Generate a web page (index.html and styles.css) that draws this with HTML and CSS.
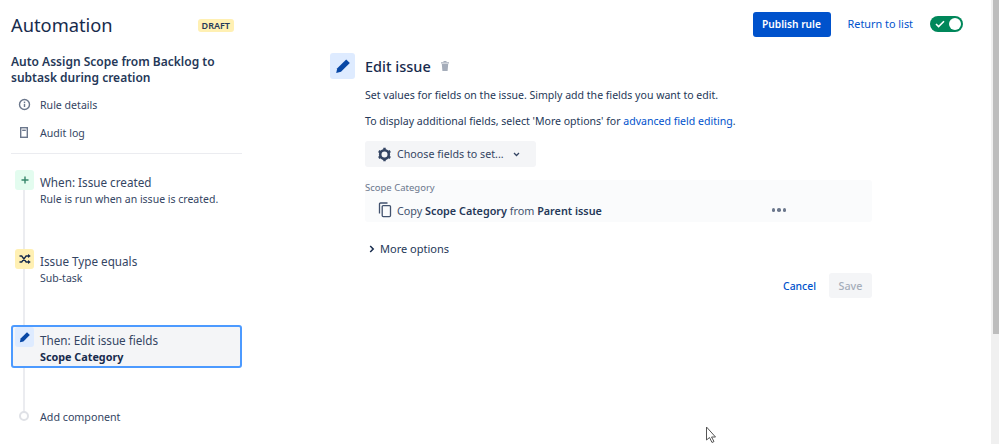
FILE: index.html
```html
<!DOCTYPE html>
<html lang="en">
<head>
  <meta charset="UTF-8">
  <title>Automation</title>
  <link rel="stylesheet" href="styles.css">
</head>
<body>
  <div class="page">
    <aside class="sidebar">
      <div class="sidebar-head">
        <h1>Automation</h1>
        <span class="draft">DRAFT</span>
      </div>
      <h2 class="rule-name">Auto Assign Scope from Backlog to subtask during creation</h2>
      <ul class="side-links">
        <li>
          <svg width="16" height="16" viewBox="0 0 16 16"><circle cx="7.5" cy="7.5" r="5" fill="none" stroke="#6b778c" stroke-width="1.4"/><rect x="6.8" y="6.8" width="1.4" height="3.2" fill="#6b778c"/><rect x="6.8" y="4.6" width="1.4" height="1.4" fill="#6b778c"/></svg>
          Rule details
        </li>
        <li>
          <svg width="16" height="16" viewBox="0 0 16 16"><rect x="3.7" y="2.7" width="6.6" height="9.6" fill="none" stroke="#6b778c" stroke-width="1.4"/><rect x="5.2" y="4.6" width="3.6" height="1.4" fill="#6b778c"/></svg>
          Audit log
        </li>
      </ul>
      <div class="steps">
        <div class="line"></div>
        <div class="step step-when">
          <span class="step-icon green">
            <svg width="10" height="10" viewBox="0 0 10 10"><path d="M5 1.5v7M1.5 5h7" stroke="#36866b" stroke-width="1.4"/></svg>
          </span>
          <div class="step-text">
            <div class="step-title">When: Issue created</div>
            <div class="step-sub">Rule is run when an issue is created.</div>
          </div>
        </div>
        <div class="step step-if">
          <span class="step-icon yellow">
            <svg width="12" height="10" viewBox="0 0 12 10"><path d="M0.5 2h2.200l4.400 6h2.600M0.5 8h2.200l4.400-6h2.600" fill="none" stroke="#172b4d" stroke-width="1.300"/><path d="M9 0l2.800 2L9 4zM9 6l2.800 2L9 10z" fill="#172b4d"/></svg>
          </span>
          <div class="step-text">
            <div class="step-title">Issue Type equals</div>
            <div class="step-sub">Sub-task</div>
          </div>
        </div>
        <div class="step step-then">
          <span class="step-icon blue">
            <svg width="12" height="12" viewBox="0 0 12 12"><path d="M8 1.200l2.800 2.800-6.400 6.400-3.500.8.700-3.600z" fill="#0747a6"/></svg>
          </span>
          <div class="step-text">
            <div class="step-title">Then: Edit issue fields</div>
            <div class="step-bold">Scope Category</div>
          </div>
        </div>
        <div class="step step-add">
          <span class="add-dot"></span>
          <div class="step-text">Add component</div>
        </div>
      </div>
    </aside>

    <main class="content">
      <div class="topbar">
        <button class="publish">Publish rule</button>
        <a class="return-link">Return to list</a>
        <span class="toggle">
          <svg width="10" height="8" viewBox="0 0 10 8"><path d="M1 4l2.600 2.600L9 1.200" fill="none" stroke="#fff" stroke-width="1.600"/></svg>
          <span class="knob"></span>
        </span>
      </div>

      <div class="editor">
        <span class="editor-icon">
          <svg width="18" height="18" viewBox="0 0 18 18"><path d="M12.200 2.400l3.600 3.600-8.800 8.800-4.800 1.200 1.100-4.800z" fill="#0747a6"/></svg>
        </span>
        <div class="editor-body">
          <div class="editor-title">
            <h3>Edit issue</h3>
            <svg width="12" height="12" viewBox="0 0 12 12"><path d="M2 2.200h8v1.200H2zM4.500 1h3v1h-3zM2.800 4h6.400l-.6 7H3.400z" fill="#a5adba"/></svg>
          </div>
          <p>Set values for fields on the issue. Simply add the fields you want to edit.</p>
          <p>To display additional fields, select 'More options' for <a>advanced field editing</a>.</p>
          <button class="choose">
            <svg width="15" height="15" viewBox="0 0 16 16"><circle cx="8" cy="8" r="4.600" fill="none" stroke="#344563" stroke-width="2.800"/><path d="M8 0.800v2.400M8 12.800v2.400M1.800 4.400l2.100 1.200M12.100 10.400l2.100 1.200M1.800 11.600l2.100-1.200M12.100 5.600l2.100-1.200" stroke="#344563" stroke-width="2.600"/></svg>
            Choose fields to set...
            <svg class="caret" width="7" height="5" viewBox="0 0 8 6"><path d="M1 1.200L4 4.200 7 1.200" fill="none" stroke="#344563" stroke-width="1.500"/></svg>
          </button>
          <div class="field">
            <div class="field-label">Scope Category</div>
            <div class="field-row">
              <svg width="14" height="16" viewBox="0 0 14 16"><path d="M9.500 1H2.500a1 1 0 0 0-1 1v9.500" fill="none" stroke="#42526e" stroke-width="1.300"/><rect x="4.200" y="3.600" width="8.300" height="11" rx="1" fill="none" stroke="#42526e" stroke-width="1.300"/></svg>
              <span>Copy <b>Scope Category</b> from <b>Parent issue</b></span>
              <span class="dots"><i></i><i></i><i></i></span>
            </div>
          </div>
          <div class="more">
            <svg width="6" height="8" viewBox="0 0 6 8"><path d="M1.200 1L4.200 4 1.200 7" fill="none" stroke="#172b4d" stroke-width="1.500"/></svg>
            More options
          </div>
          <div class="actions">
            <a class="cancel">Cancel</a>
            <button class="save">Save</button>
          </div>
        </div>
      </div>
    </main>
  </div>

  <div class="scrollbar"><div class="scroll-thumb"></div></div>
  <svg class="cursor" width="14" height="18" viewBox="0 0 14 18"><path d="M1.500 1v13l3-2.500 2.500 5 2-1-2.500-4.500h4z" fill="#fff" stroke="#555" stroke-width="1"/></svg>
</body>
</html>
```

FILE: styles.css
```css
* {
  box-sizing: border-box;
}
body {
  margin: 0;
  height: 444px;
  overflow: hidden;
  background-color: #fff;
  color: #172b4d;
  font-family: "Noto Sans", sans-serif;
  font-size: 10.6px;
  position: relative;
}
.page {
  display: flex;
  padding-left: 11px;
  height: 100%;
}
.sidebar {
  width: 231px;
  flex-shrink: 0;
}
.sidebar-head {
  display: flex;
  justify-content: space-between;
  align-items: center;
  padding-top: 12px;
  padding-right: 8px;
}
h1 {
  margin: 0;
  font-size: 18.3px;
  line-height: 26px;
  font-weight: 400;
}
.draft {
  background-color: #fff0b3;
  border-radius: 3px;
  font-size: 9px;
  font-weight: 600;
  line-height: 13px;
  padding: 0 4px;
  color: #253858;
}
.rule-name {
  margin: 16px 0 0;
  font-size: 12px;
  line-height: 16px;
  font-weight: 600;
  color: #253858;
}
.side-links {
  list-style: none;
  margin: 5px 0 0;
  padding: 0 0 0 6px;
}
.side-links li {
  display: flex;
  align-items: center;
  gap: 7px;
  height: 28px;
  color: #344563;
}
.steps {
  position: relative;
  border-top: 1px solid #ebecf0;
  margin-top: 6px;
  padding-top: 16px;
}
.line {
  position: absolute;
  left: 12px;
  top: 30px;
  height: 228px;
  width: 2px;
  background-color: #ebecf0;
}
.step {
  position: relative;
  display: flex;
  padding-left: 29px;
  line-height: 17px;
  color: #344563;
}
.step-text {
  padding-top: 4px;
}
.step-title {
  font-size: 11.7px;
}
.step-sub {
  font-size: 10.5px;
}
.step-icon {
  position: absolute;
  left: 4px;
  top: 0;
  width: 19px;
  height: 20px;
  border-radius: 3px;
  display: flex;
  align-items: center;
  justify-content: center;
}
.green { background-color: #e3fcef; }
.yellow { background-color: #fff0b3; }
.blue { background-color: #deebff; }
.step-bold {
  font-weight: 700;
  font-size: 10.8px;
  line-height: 16px;
  color: #172b4d;
}
.step-if {
  margin-top: 41px;
}
.step-then {
  margin-top: 38px;
  height: 43px;
  padding-top: 1px;
  padding-left: 27px;
  border: 2px solid #4c9aff;
  border-radius: 3px;
  background-color: #f4f5f7;
}
.step-then .step-icon {
  left: 2px;
}
.step-add {
  margin-top: 37px;
  font-size: 10.7px;
}
.add-dot {
  position: absolute;
  left: 8px;
  top: 6px;
  width: 10px;
  height: 10px;
  border-radius: 50%;
  border: 2px solid #dfe1e6;
  background-color: #fff;
}
.content {
  flex: 1;
  padding-right: 36px;
  min-width: 0;
}
.topbar {
  display: flex;
  justify-content: flex-end;
  align-items: center;
  padding-top: 11px;
  height: 37px;
}
.publish {
  background-color: #0052cc;
  color: #fff;
  border: none;
  border-radius: 3px;
  font: 600 10.2px "Noto Sans", sans-serif;
  width: 78px;
  height: 25px;
  margin-top: 1px;
  padding: 0 0 1px;
}
.return-link {
  color: #0052cc;
  font-size: 10.85px;
  margin-left: 17px;
  padding-bottom: 1px;
}
.toggle {
  margin-left: 17px;
  width: 33px;
  height: 16px;
  border-radius: 8px;
  background-color: #00875a;
  position: relative;
  display: flex;
  align-items: center;
  padding-left: 5px;
}
.knob {
  position: absolute;
  right: 2px;
  top: 2px;
  width: 12px;
  height: 12px;
  border-radius: 50%;
  background-color: #fff;
}
.editor {
  display: flex;
  margin-top: 16px;
  margin-left: 88px;
}
.editor-icon {
  width: 25px;
  height: 26px;
  border-radius: 3px;
  background-color: #deebff;
  display: flex;
  align-items: center;
  justify-content: center;
  flex-shrink: 0;
}
.editor-body {
  margin-left: 10px;
  width: 507px;
}
.editor-title {
  display: flex;
  align-items: center;
  gap: 8px;
  height: 26px;
}
h3 {
  margin: 0;
  font-size: 14.5px;
  font-weight: 500;
}
.editor-body p {
  margin: 0;
  line-height: 17px;
  font-size: 10.55px;
  color: #253858;
}
.editor-title + p {
  margin-top: 8px;
}
.editor-body p + p {
  margin-top: 9px;
}
.editor-body a {
  color: #0052cc;
}
.choose {
  display: flex;
  align-items: center;
  margin-top: 11px;
  height: 26px;
  width: 171px;
  padding: 0 0 0 12px;
  gap: 5px;
  border: none;
  border-radius: 3px;
  background-color: #f4f5f7;
  color: #344563;
  font: 10.7px "Noto Sans", sans-serif;
}
.caret {
  margin-left: 4px;
}
.field {
  margin-top: 13px;
  height: 42px;
  background-color: #fafbfc;
  border-radius: 3px;
}
.field-label {
  font-size: 9.5px;
  line-height: 16px;
  color: #6b778c;
}
.field-row {
  display: flex;
  align-items: center;
  gap: 5px;
  padding: 6px 0 0 13px;
  font-size: 10.8px;
  color: #42526e;
}
.field-row b {
  font-weight: 600;
  color: #253858;
}
.dots {
  display: flex;
  gap: 2px;
  margin-left: auto;
  margin-right: 86px;
}
.dots i {
  width: 3.5px;
  height: 3.5px;
  border-radius: 50%;
  background-color: #6b778c;
}
.more {
  display: flex;
  align-items: center;
  gap: 5px;
  margin-top: 18px;
  padding-left: 4px;
  line-height: 18px;
  font-size: 11px;
  color: #253858;
}
.actions {
  display: flex;
  justify-content: flex-end;
  align-items: center;
  gap: 13px;
  margin-top: 15px;
}
.cancel {
  font-weight: 500;
  font-size: 10.4px;
}
.save {
  width: 43px;
  height: 25px;
  border: none;
  border-radius: 3px;
  padding: 0;
  background-color: #f4f5f7;
  color: #a5adba;
  font: 500 10.7px "Noto Sans", sans-serif;
}
.scrollbar {
  position: absolute;
  right: 0;
  top: 0;
  bottom: 0;
  width: 8px;
  padding-left: 2px;
  background-color: #f0f0f0;
}
.scroll-thumb {
  height: 334px;
  background-color: #bdbdbd;
}
.cursor {
  position: absolute;
  left: 705px;
  top: 426px;
}
```
